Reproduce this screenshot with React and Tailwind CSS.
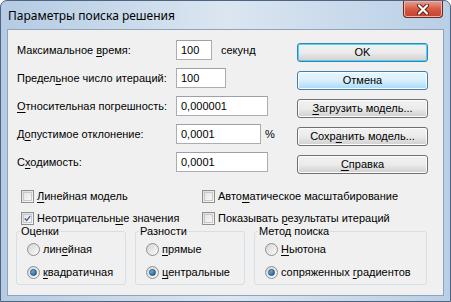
import React from 'react';

const font = { fontFamily: '"Liberation Sans", Arial, sans-serif' };

// подчёркнутая буква (клавиша доступа)
function Label({ text, u }) {
  if (u == null) return <span>{text}</span>;
  return (
    <span>
      {text.slice(0, u)}
      <span className="underline underline-offset-[2px]">{text[u]}</span>
      {text.slice(u + 1)}
    </span>
  );
}

function Field({ label, u, value, width, suffix }) {
  return (
    <div className="flex h-[20px] items-center">
      <div className="w-[159px]">
        <Label text={label} u={u} />
      </div>
      <div
        className="flex h-[20px] items-center border border-[#abadb3] border-t-[#9ca0a8] bg-white pl-[4px]"
        style={{ width }}
      >
        {value}
      </div>
      {suffix}
    </div>
  );
}

function Button({ text, u, variant }) {
  let cls =
    'border-[#707070] bg-gradient-to-b from-[#f2f2f2] via-[#ebebeb] via-50% to-[#cfcfcf] shadow-[inset_0_0_0_1px_#fcfcfc]';
  if (variant === 'default')
    cls =
      'border-[#3c7fb1] bg-gradient-to-b from-[#f2f2f2] via-[#ebebeb] via-50% to-[#cfcfcf] shadow-[inset_0_0_0_1px_#48d7fb]';
  if (variant === 'hover')
    cls =
      'border-[#3c7fb1] bg-gradient-to-b from-[#eaf6fd] via-[#d9f0fc] via-50% to-[#a7d9f5] shadow-[inset_0_0_0_1px_#fcfcfc]';
  return (
    <div className={`flex h-[19px] w-[131px] items-center justify-center rounded-[3px] border ${cls}`}>
      <Label text={text} u={u} />
    </div>
  );
}

function Checkbox({ checked, text, u }) {
  return (
    <div className="flex h-[14px] items-center gap-[3px]">
      <div className="flex h-[13px] w-[13px] items-center justify-center border border-[#8f8f8f] bg-gradient-to-br from-[#dcdcdc] to-[#fafafa] p-[1px]">
        <div className="flex h-full w-full items-center justify-center border border-[#c8c8c8] bg-gradient-to-br from-[#e4e4e4] to-[#f8f8f8]">
          {checked && (
            <svg width="9" height="9" viewBox="0 0 9 9">
              <path d="M1 4.5 L3.5 7 L8 1.5" fill="none" stroke="#4a5f97" strokeWidth="1.8" />
            </svg>
          )}
        </div>
      </div>
      <Label text={text} u={u} />
    </div>
  );
}

function Radio({ checked, text, u }) {
  return (
    <div className="flex h-[16px] items-center gap-[3px]">
      <div className="flex h-[13px] w-[13px] items-center justify-center rounded-full border border-[#8f8f8f] bg-gradient-to-br from-[#d4d4d4] to-[#fbfbfb]">
        {checked && (
          <div className="h-[7px] w-[7px] rounded-full border border-[#1b4d7a] bg-gradient-to-br from-[#7fc1ef] to-[#1d5b96]" />
        )}
      </div>
      <Label text={text} u={u} />
    </div>
  );
}

function Group({ title, width, children }) {
  return (
    <fieldset
      className="m-0 min-w-0 shrink-0 rounded-[3px] border border-[#d5dfe5] p-0"
      style={{ width }}
    >
      <legend className="ml-[3px] px-[1px] leading-[13px]">{title}</legend>
      <div className="flex flex-col gap-[7px] pb-[4px] pl-[10px] pt-[3px]">{children}</div>
    </fieldset>
  );
}

export default function App() {
  return (
    <div
      className="relative flex h-[302px] w-[451px] flex-col rounded-t-[7px] border border-[#4d6580] bg-gradient-to-r from-[#b4cbe3] via-[#dbe6f1] to-[#b9cfe6] text-[11px] text-black"
      style={font}
    >
      <div className="flex h-[28px] items-start justify-between">
        <div
          className="pl-[7px] pt-[6px] text-[12px] text-black"
          style={{ fontFamily: '"Noto Sans", "Liberation Sans", sans-serif' }}
        >
          Параметры поиска решения
        </div>
        <div className="mr-[7px] flex h-[17px] w-[40px] items-center justify-center rounded-b-[4px] border border-t-0 border-[#6d2a22] bg-gradient-to-b from-[#e8a08e] via-[#d45b44] via-50% to-[#c4412a] shadow-[inset_0_0_0_1px_#f0b2a4]">
          <svg width="14" height="11" viewBox="0 0 14 11">
            <path d="M3 1.5 L11 9.5 M11 1.5 L3 9.5" stroke="#5a2018" strokeWidth="4" strokeLinecap="round" />
            <path d="M3 1.5 L11 9.5 M11 1.5 L3 9.5" stroke="#ffffff" strokeWidth="2.2" strokeLinecap="round" />
          </svg>
        </div>
      </div>

      <div className="mx-[6px] mb-[5px] flex flex-1 flex-col border border-[#8fa3bb] bg-[#f0f0f0]">
        <div className="flex pt-[10px]">
          <div className="flex w-[288px] flex-col gap-[8px] pl-[9px]">
            <Field label="Максимальное время:" u={13} value="100" width={36} suffix={<span className="ml-[9px]">секунд</span>} />
            <Field label="Предельное число итераций:" u={6} value="100" width={50} />
            <Field label="Относительная погрешность:" u={0} value="0,000001" width={92} />
            <Field label="Допустимое отклонение:" u={1} value="0,0001" width={85} suffix={<span className="ml-[4px]">%</span>} />
            <Field label="Сходимость:" u={1} value="0,0001" width={92} />
          </div>
          <div className="mt-[3px] flex flex-col gap-[9px] pl-[1px]">
            <Button text="OK" variant="default" />
            <Button text="Отмена" variant="hover" />
            <Button text="Загрузить модель..." u={0} />
            <Button text="Сохранить модель..." u={4} />
            <Button text="Справка" u={0} />
          </div>
        </div>

        <div className="mt-[15px] flex flex-col gap-[8px] pl-[13px]">
          <div className="flex">
            <div className="w-[181px]">
              <Checkbox text="Линейная модель" u={0} />
            </div>
            <Checkbox text="Автоматическое масштабирование" u={4} />
          </div>
          <div className="flex">
            <div className="w-[181px]">
              <Checkbox checked text="Неотрицательные значения" u={13} />
            </div>
            <Checkbox text="Показывать результаты итераций" u={11} />
          </div>
        </div>

        <div className="flex gap-[9px] pl-[8px]">
          <Group title="Оценки" width={110}>
            <Radio text="линейная" u={3} />
            <Radio checked text="квадратичная" u={0} />
          </Group>
          <Group title="Разности" width={110}>
            <Radio text="прямые" u={0} />
            <Radio checked text="центральные" u={0} />
          </Group>
          <Group title="Метод поиска" width={173}>
            <Radio text="Ньютона" u={0} />
            <Radio checked text="сопряженных градиентов" u={12} />
          </Group>
        </div>
      </div>
    </div>
  );
}
